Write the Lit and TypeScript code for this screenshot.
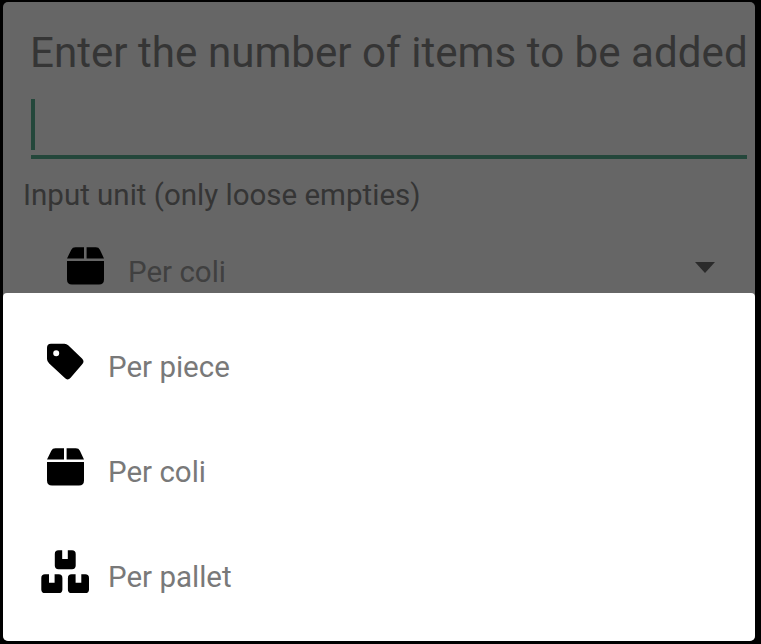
import { LitElement, html, css, svg } from "lit";
import { customElement, property } from "lit/decorators.js";

type IconName = "tag" | "box" | "boxes";

const shapes = {
  tag: svg`<path fill-rule="evenodd" d="M10 5.800H23.500Q25.600 5.800 27.200 7.300L41 20.500Q44 23.500 41 26.500L29.600 39.800Q26.600 43 23.600 39.800L8.200 25.400Q6 23.400 6 21V10Q6 5.800 10 5.800ZM15.200 12.200A3 3 0 1 0 15.200 18.200A3 3 0 1 0 15.200 12.200Z"/>`,
  box: svg`<path d="M14.400 5.300H23V16.400H6L10.300 7.700Q11.500 5.300 14.400 5.300ZM25.600 5.300H34.800Q37.800 5.300 38.900 7.700L43 16.400H25.600ZM6 18.900H43V37.400Q43 42.400 38 42.400H11Q6 42.400 6 37.400Z"/>`,
  boxes: svg`<path d="M17.500 2.300H21.200V11H26.800V2.300H31Q34.700 2.300 34.700 6V17.500Q34.700 21.200 31 21.200H17.500Q13.800 21.200 13.800 17.500V6Q13.800 2.300 17.500 2.300Z"/>
    <path d="M4 26.200H8V34.700H13.600V26.200H17.700Q21.400 26.200 21.400 29.900V41.400Q21.400 45.100 17.700 45.100H4Q.300 45.100 .300 41.400V29.900Q.300 26.200 4 26.200Z"/>
    <path d="M30.600 26.200H34.600V34.700H40.300V26.200H44.300Q48 26.200 48 29.900V41.400Q48 45.100 44.300 45.100H30.600Q26.900 45.100 26.900 41.400V29.900Q26.900 26.200 30.600 26.200Z"/>`,
};

@customElement("unit-option")
export class UnitOption extends LitElement {
  @property() icon: IconName = "box";
  @property() label = "";

  static styles = css`
    :host {
      display: flex;
      align-items: center;
      color: #797979;
    }
    .icon {
      width: 48px;
      height: 48px;
      fill: #000;
      flex: none;
    }
    .label {
      margin: 11px 0 0 19px;
      font-size: 29.5px;
      line-height: 36px;
      white-space: nowrap;
    }
  `;

  render() {
    return html`<svg class="icon" viewBox="0 0 48 48">${shapes[this.icon]}</svg>
      <span class="label">${this.label}</span>`;
  }
}

@customElement("app-root")
export class AppRoot extends LitElement {
  static styles = css`
    :host {
      display: block;
      box-sizing: border-box;
      width: 761px;
      height: 644px;
      padding: 2px 6px 3px 3px;
      background: #000;
      font-family: Roboto, sans-serif;
      overflow: hidden;
    }
    .screen {
      display: flex;
      flex-direction: column;
      height: 639px;
      border-radius: 5px;
      overflow: hidden;
      background: #666;
    }
    .form {
      box-sizing: border-box;
      height: 291px;
      padding: 26px 8px 0 20px;
      overflow: hidden;
      color: #353535;
    }
    .title {
      margin-left: 7px;
      font-size: 42.15px;
      line-height: 50px;
      white-space: nowrap;
    }
    .field {
      box-sizing: border-box;
      height: 60px;
      margin: 21px 0 0 8px;
      border-bottom: 4px solid #24473b;
    }
    .caret {
      width: 4px;
      height: 51px;
      background: #24473b;
    }
    .caption {
      margin-top: 18px;
      font-size: 29.5px;
      line-height: 36px;
    }
    .select {
      display: flex;
      align-items: center;
      justify-content: space-between;
      height: 60px;
      margin: 23px 32px 0 38px;
    }
    .select unit-option {
      color: #404040;
    }
    .arrow {
      width: 20px;
      height: 11px;
      margin-top: 2px;
      fill: #2b2b2b;
    }
    .menu {
      flex: 1;
      padding: 16px 38px;
      background: #fff;
      border-radius: 4px 4px 0 0;
    }
    .menu unit-option {
      height: 105px;
    }
  `;

  render() {
    return html`<div class="screen">
      <div class="form">
        <div class="title">Enter the number of items to be added</div>
        <div class="field"><div class="caret"></div></div>
        <div class="caption">Input unit (only loose empties)</div>
        <div class="select">
          <unit-option icon="box" label="Per coli"></unit-option>
          <svg class="arrow" viewBox="0 0 20 11"><path d="M0 0H20L10 11Z" /></svg>
        </div>
      </div>
      <div class="menu">
        <unit-option icon="tag" label="Per piece"></unit-option>
        <unit-option icon="box" label="Per coli"></unit-option>
        <unit-option icon="boxes" label="Per pallet"></unit-option>
      </div>
    </div>`;
  }
}
